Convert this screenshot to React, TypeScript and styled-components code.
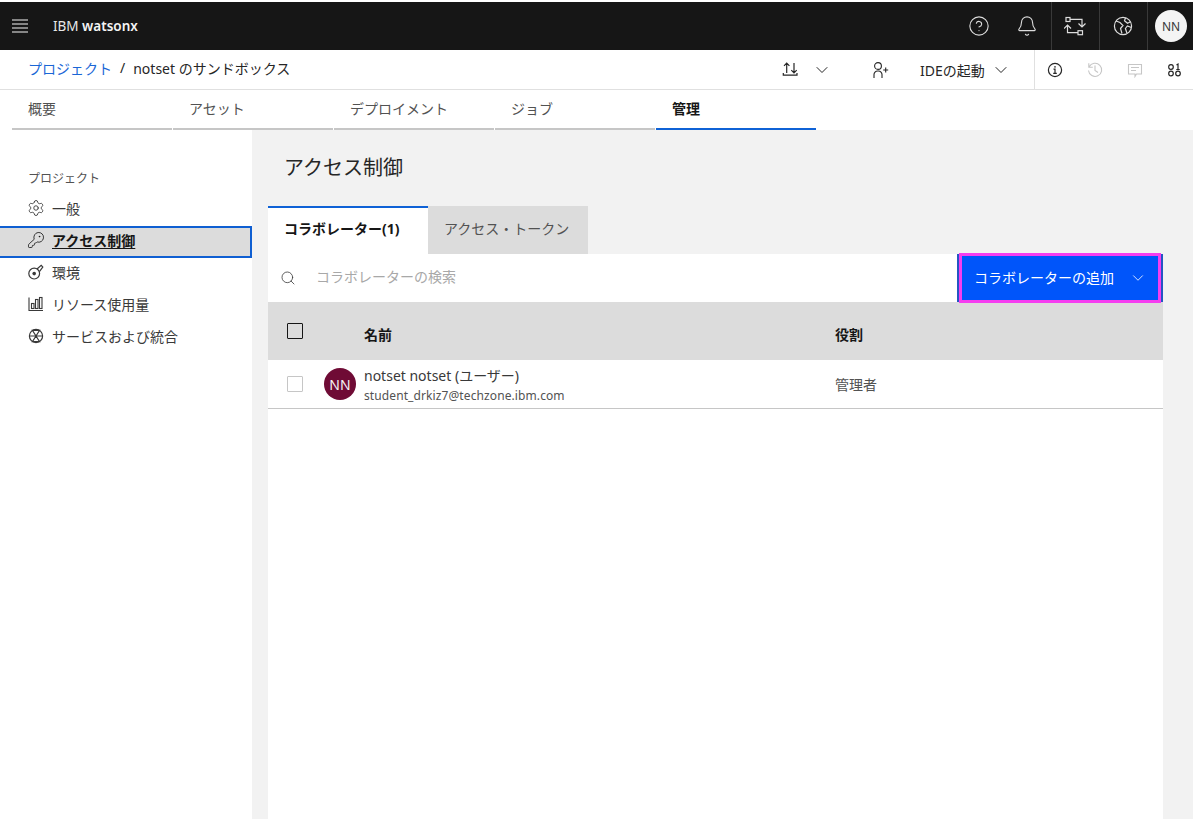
import * as React from "react";
import styled, { createGlobalStyle } from "styled-components";
import { Bell, ChevronDown, CircleHelp, Search, Settings, KeyRound } from "lucide-react";

const GlobalStyle = createGlobalStyle`
    html, body { margin: 0; padding: 0; height: 100%; }
    body {
        font-family: "Noto Sans", "Noto Sans CJK JP", sans-serif;
        background: #fff;
        color: #161616;
        overflow: hidden;
    }
`;

const Page = styled.div`
    width: 1193px;
    height: 819px;
    display: flex;
    flex-direction: column;
    overflow: hidden;
    padding-top: 2px;
    box-sizing: border-box;
`;

const TopBar = styled.header`
    height: 48px;
    flex: none;
    background: #161616;
    display: flex;
    align-items: center;
    color: #f4f4f4;
`;

const MenuButton = styled.div`
    width: 40px;
    height: 48px;
    display: flex;
    align-items: center;
    justify-content: center;
    color: #f4f4f4;
`;

const Brand = styled.div`
    margin-left: 13px;
    font-size: 13.5px;
    color: #e8e8e8;
    flex: 1;
    b { font-weight: 600; color: #f4f4f4; }
`;

const TopIcon = styled.div<{ $divided?: boolean }>`
    width: 48px;
    height: 48px;
    box-sizing: border-box;
    display: flex;
    align-items: center;
    justify-content: center;
    color: #dcdcdc;
    padding-right: ${p => (p.$divided ? 1 : 2)}px;
    border-left: 1px solid ${p => (p.$divided ? "#393939" : "transparent")};
`;

const UserBadge = styled.div`
    width: 46px;
    height: 48px;
    box-sizing: border-box;
    display: flex;
    align-items: center;
    border-left: 1px solid #393939;
    padding-left: 7px;
`;

const UserCircle = styled.div`
    width: 32px;
    height: 32px;
    border-radius: 50%;
    background: #f4f4f4;
    color: #393939;
    font-size: 12px;
    display: flex;
    align-items: center;
    justify-content: center;
`;

const SubBar = styled.div`
    height: 40px;
    flex: none;
    box-sizing: border-box;
    border-bottom: 1px solid #e0e0e0;
    display: flex;
    align-items: center;
    padding-left: 28px;
`;

const Crumbs = styled.div`
    flex: 1;
    font-size: 14px;
    display: flex;
    gap: 8px;
    color: #262626;
    margin-top: -3px;
`;

const CrumbLink = styled.span`
    color: #1a66d6;
`;

const ActionGroup = styled.div`
    display: flex;
    align-items: center;
    height: 100%;
    color: #262626;
`;

const ActionSlot = styled.div<{ $w: number; $dim?: boolean; $after?: number }>`
    width: ${p => p.$w}px;
    margin-right: ${p => p.$after ?? 0}px;
    height: 100%;
    display: flex;
    align-items: center;
    justify-content: center;
    color: ${p => (p.$dim ? "#c6c6c6" : "#262626")};
`;

const IdeButton = styled.div`
    width: 134px;
    height: 100%;
    box-sizing: border-box;
    padding-left: 20px;
    display: flex;
    align-items: center;
    gap: 6px;
    font-size: 14px;
    color: #262626;
`;

const ActionDivider = styled.div`
    width: 1px;
    height: 100%;
    background: #e0e0e0;
`;

const TabsRow = styled.nav`
    height: 40px;
    flex: none;
    display: flex;
    gap: 1px;
    padding-left: 12px;
    background: #fff;
`;

const PageTab = styled.div<{ $active?: boolean }>`
    width: 160px;
    box-sizing: border-box;
    padding: 10px 0 0 16px;
    font-size: 14px;
    color: ${p => (p.$active ? "#161616" : "#525252")};
    font-weight: ${p => (p.$active ? 600 : 400)};
    border-bottom: 2px solid ${p => (p.$active ? "#0f62d6" : "#c6c6c6")};
    line-height: 18px;
`;

const Body = styled.div`
    flex: 1;
    display: flex;
    min-height: 0;
`;

const SideNav = styled.aside`
    width: 252px;
    flex: none;
    background: #fff;
    padding-top: 40px;
`;

const SideTitle = styled.div`
    font-size: 12px;
    line-height: 18px;
    color: #525252;
    padding-left: 28px;
    margin-bottom: 6px;
`;

const SideItem = styled.div<{ $active?: boolean }>`
    height: 32px;
    box-sizing: border-box;
    display: flex;
    align-items: center;
    gap: 7px;
    padding: 0 0 4px 27px;
    font-size: 14px;
    color: #393939;
    ${p => p.$active && `
        background: #dcdcdc;
        border: 2px solid #0f5fd2;
        border-left: none;
        padding-bottom: 4px;
        font-weight: 700;
        color: #161616;
        span { text-decoration: underline; text-underline-offset: 2px; }
    `}
`;

const Main = styled.main`
    flex: 1;
    background: #f2f2f2;
    padding: 0 30px 0 16px;
    display: flex;
    flex-direction: column;
    min-width: 0;
`;

const Heading = styled.h1`
    margin: 23px 0 0 16px;
    height: 53px;
    font-size: 20px;
    line-height: 30px;
    font-weight: 400;
    color: #262626;
`;

const PanelTabs = styled.div`
    display: flex;
    height: 48px;
    flex: none;
`;

const PanelTab = styled.div<{ $active?: boolean }>`
    width: 160px;
    box-sizing: border-box;
    padding-left: 16px;
    font-size: 14px;
    line-height: 42px;
    border-top: 2px solid ${p => (p.$active ? "#0f62d6" : "#dcdcdc")};
    background: ${p => (p.$active ? "#fff" : "#dcdcdc")};
    color: ${p => (p.$active ? "#161616" : "#525252")};
    font-weight: ${p => (p.$active ? 700 : 400)};
`;

const Panel = styled.section`
    flex: 1;
    background: #fff;
    display: flex;
    flex-direction: column;
`;

const SearchRow = styled.div`
    height: 48px;
    flex: none;
    display: flex;
    align-items: center;
    padding-left: 12px;
`;

const SearchHint = styled.div`
    flex: 1;
    margin: 0 0 4px 20px;
    font-size: 14px;
    color: #a8a8a8;
`;

const AddButton = styled.div`
    position: relative;
    width: 206px;
    height: 48px;
    box-sizing: border-box;
    background: #0055fa;
    color: #fff;
    font-size: 14px;
    display: flex;
    align-items: center;
    justify-content: space-between;
    padding: 0 14px 0 15px;
    border-left: 2px solid #2456c4;
    border-right: 2px solid #2456c4;
    &::after {
        content: "";
        position: absolute;
        left: 0;
        right: 0;
        top: -1px;
        bottom: -1px;
        border: 3px solid #f53df0;
    }
`;

const ButtonLabel = styled.span`
    margin-bottom: 3px;
`;

const HeadRow = styled.div`
    height: 58px;
    flex: none;
    background: #dcdcdc;
    display: grid;
    grid-template-columns: 96px 471px 1fr;
    font-size: 14px;
    font-weight: 700;
    color: #161616;
`;

const HeadCell = styled.div`
    padding-top: 23px;
    line-height: 20px;
`;

const BoxCell = styled.div`
    padding: 21px 0 0 19px;
`;

const Box = styled.div<{ $dim?: boolean }>`
    width: 16px;
    height: 16px;
    border-radius: 1px;
    box-sizing: border-box;
    border: 1px solid ${p => (p.$dim ? "#c6c6c6" : "#161616")};
`;

const DataRow = styled.div`
    height: 49px;
    flex: none;
    box-sizing: border-box;
    border-bottom: 1px solid #c6c6c6;
    display: grid;
    grid-template-columns: 56px 40px 471px 1fr;
    align-items: center;
`;

const RowBox = styled.div`
    padding-left: 19px;
`;

const Avatar = styled.div`
    width: 32px;
    height: 32px;
    border-radius: 50%;
    background: #6f0b35;
    color: #f4f4f4;
    font-size: 14px;
    display: flex;
    align-items: center;
    justify-content: center;
`;

const NameCell = styled.div`
    display: flex;
    flex-direction: column;
    gap: 2px;
    padding-top: 4px;
`;

const UserName = styled.div`
    font-size: 14px;
    line-height: 18px;
    color: #393939;
`;

const UserMail = styled.div`
    font-size: 12px;
    line-height: 18px;
    color: #525252;
    letter-spacing: 0.1px;
`;

const RoleCell = styled.div`
    font-size: 14px;
    color: #525252;
`;

const SwitchIcon = () => (
    <svg width="22" height="20" viewBox="0 0 22 20" fill="none" stroke="currentColor" strokeWidth="1.2">
        <rect x="2" y="1.5" width="4" height="4" />
        <rect x="14" y="14.7" width="4.5" height="4" />
        <path d="M6 3.3h12v7.7M14.5 7.5l3.5 3.5 3.5-3.5M14 16.7H3.5V9M0 12.5L3.5 9 7 12.5" />
    </svg>
);

const GlobeIcon = () => (
    <svg width="20" height="20" viewBox="0 0 20 20" fill="none" stroke="currentColor" strokeWidth="1.2">
        <circle cx="10" cy="10" r="8.6" />
        <path d="M3 5l4 1.5 3 3-2.5 3 1.5 5M12.5 1.8l-1 3 3 2.5 3-1.5M18.4 11.5l-4-1.5-2 2.5 1.5 4.5" />
    </svg>
);

const TransferIcon = () => (
    <svg width="16" height="16" viewBox="0 0 16 16" fill="none" stroke="currentColor" strokeWidth="1.2">
        <path d="M4.7 11V1.2M2 3.9l2.7-2.7 2.7 2.7M12 1v9.8M9.3 8.1l2.7 2.7 2.7-2.7M1.3 11v2.2H15V11" />
    </svg>
);

const UserPlusIcon = () => (
    <svg width="18" height="18" viewBox="0 0 18 18" fill="none" stroke="currentColor" strokeWidth="1.1">
        <circle cx="7" cy="5" r="3.4" />
        <path d="M3 17v-3.5A3.5 3.5 0 0 1 6.5 10h1a3.5 3.5 0 0 1 3.5 3.5V17M12.2 9h5M14.7 6.5v5" />
    </svg>
);

const InfoIcon = () => (
    <svg width="16" height="16" viewBox="0 0 16 16" fill="none" stroke="currentColor" strokeWidth="1.2">
        <circle cx="8" cy="8" r="6.6" />
        <path d="M6.5 7.2H8v4M6.2 11.3h3.6" />
        <circle cx="8" cy="4.9" r="0.8" fill="currentColor" stroke="none" />
    </svg>
);

const HistoryIcon = () => (
    <svg width="16" height="16" viewBox="0 0 16 16" fill="none" stroke="currentColor" strokeWidth="1.1">
        <path d="M1.8 1.2v4h4M2.2 4.8A6.6 6.6 0 1 1 1.5 8.5" />
        <path d="M8 3.5v5l3 2" />
    </svg>
);

const CommentIcon = () => (
    <svg width="16" height="16" viewBox="0 0 16 16" fill="none" stroke="currentColor" strokeWidth="1.1">
        <path d="M1.5 2.5h13v9.5H9.5L8 14.5V12H1.5zM4 5.5h8M4 8.5h5" />
    </svg>
);

const NodesIcon = () => (
    <svg width="16" height="16" viewBox="0 0 16 16" fill="none" stroke="currentColor" strokeWidth="1.2">
        <circle cx="5" cy="5" r="2.3" />
        <circle cx="5" cy="11.5" r="2.3" />
        <circle cx="12" cy="11.5" r="2.3" />
        <path d="M10.5 3L12 2v5.5M10.3 7.5h3.4" />
    </svg>
);

const EnvIcon = () => (
    <svg width="18" height="18" viewBox="0 0 18 18" fill="none" stroke="currentColor" strokeWidth="1.2">
        <circle cx="7.2" cy="10.6" r="5.4" />
        <circle cx="7.2" cy="10.6" r="1.8" fill="currentColor" stroke="none" />
        <path d="M10 6l4.2-3.6 1.6 1.6-3.4 4.6" />
    </svg>
);

const BarsIcon = () => (
    <svg width="18" height="18" viewBox="0 0 18 18" fill="none" stroke="currentColor" strokeWidth="1.1">
        <path d="M2 2.5V15.5H16" />
        <rect x="4.5" y="8.5" width="2.5" height="5" />
        <rect x="8.5" y="4.5" width="2.5" height="9" />
        <rect x="12.5" y="2.5" width="2.5" height="11" />
    </svg>
);

const ServiceIcon = () => (
    <svg width="18" height="18" viewBox="0 0 18 18" fill="none" stroke="currentColor" strokeWidth="1.2">
        <circle cx="9" cy="9" r="6.6" />
        <path d="M9 9L5.4 3.3h7.2zM9 9l-3.6 5.7h7.2zM2.4 9h13.2" />
    </svg>
);

const MenuIcon = () => (
    <svg width="16" height="14" viewBox="0 0 16 14" fill="none" stroke="currentColor" strokeWidth="1.2">
        <path d="M0 1h16M0 5h16M0 9h16M0 13h16" />
    </svg>
);

const pageTabs = ["概要", "アセット", "デプロイメント", "ジョブ", "管理"];

const sideItems = [
    { label: "一般", icon: <Settings size={18} strokeWidth={1.2} /> },
    { label: "アクセス制御", icon: <KeyRound size={18} strokeWidth={1.1} />, active: true },
    { label: "環境", icon: <EnvIcon /> },
    { label: "リソース使用量", icon: <BarsIcon /> },
    { label: "サービスおよび統合", icon: <ServiceIcon /> },
];

export default function App() {
    return (
        <Page>
            <GlobalStyle />
            <TopBar>
                <MenuButton><MenuIcon /></MenuButton>
                <Brand>IBM <b>watsonx</b></Brand>
                <TopIcon><CircleHelp size={22} strokeWidth={1.2} /></TopIcon>
                <TopIcon><Bell size={22} strokeWidth={1.2} /></TopIcon>
                <TopIcon $divided><SwitchIcon /></TopIcon>
                <TopIcon $divided><GlobeIcon /></TopIcon>
                <UserBadge><UserCircle>NN</UserCircle></UserBadge>
            </TopBar>
            <SubBar>
                <Crumbs>
                    <CrumbLink>プロジェクト</CrumbLink>
                    <span>/</span>
                    <span>notset のサンドボックス</span>
                </Crumbs>
                <ActionGroup>
                    <ActionSlot $w={40}><TransferIcon /></ActionSlot>
                    <ActionSlot $w={24} $after={26}><ChevronDown size={20} strokeWidth={1.2} /></ActionSlot>
                    <ActionSlot $w={40}><UserPlusIcon /></ActionSlot>
                    <IdeButton>IDEの起動 <ChevronDown size={20} strokeWidth={1.2} /></IdeButton>
                    <ActionDivider />
                    <ActionSlot $w={40}><InfoIcon /></ActionSlot>
                    <ActionSlot $w={40} $dim><HistoryIcon /></ActionSlot>
                    <ActionSlot $w={40} $dim><CommentIcon /></ActionSlot>
                    <ActionSlot $w={38}><NodesIcon /></ActionSlot>
                </ActionGroup>
            </SubBar>
            <TabsRow>
                {pageTabs.map((t, i) => (
                    <PageTab key={t} $active={i === 4}>{t}</PageTab>
                ))}
            </TabsRow>
            <Body>
                <SideNav>
                    <SideTitle>プロジェクト</SideTitle>
                    {sideItems.map(item => (
                        <SideItem key={item.label} $active={item.active}>
                            {item.icon}
                            <span>{item.label}</span>
                        </SideItem>
                    ))}
                </SideNav>
                <Main>
                    <Heading>アクセス制御</Heading>
                    <PanelTabs>
                        <PanelTab $active>コラボレーター(1)</PanelTab>
                        <PanelTab>アクセス・トークン</PanelTab>
                    </PanelTabs>
                    <Panel>
                        <SearchRow>
                            <Search size={16} strokeWidth={1.2} color="#393939" />
                            <SearchHint>コラボレーターの検索</SearchHint>
                            <AddButton>
                                <ButtonLabel>コラボレーターの追加</ButtonLabel>
                                <ChevronDown size={18} strokeWidth={1.1} />
                            </AddButton>
                        </SearchRow>
                        <HeadRow>
                            <BoxCell><Box /></BoxCell>
                            <HeadCell>名前</HeadCell>
                            <HeadCell>役割</HeadCell>
                        </HeadRow>
                        <DataRow>
                            <RowBox><Box $dim /></RowBox>
                            <Avatar>NN</Avatar>
                            <NameCell>
                                <UserName>notset notset (ユーザー)</UserName>
                                <UserMail>student_drkiz7@techzone.ibm.com</UserMail>
                            </NameCell>
                            <RoleCell>管理者</RoleCell>
                        </DataRow>
                    </Panel>
                </Main>
            </Body>
        </Page>
    );
}
